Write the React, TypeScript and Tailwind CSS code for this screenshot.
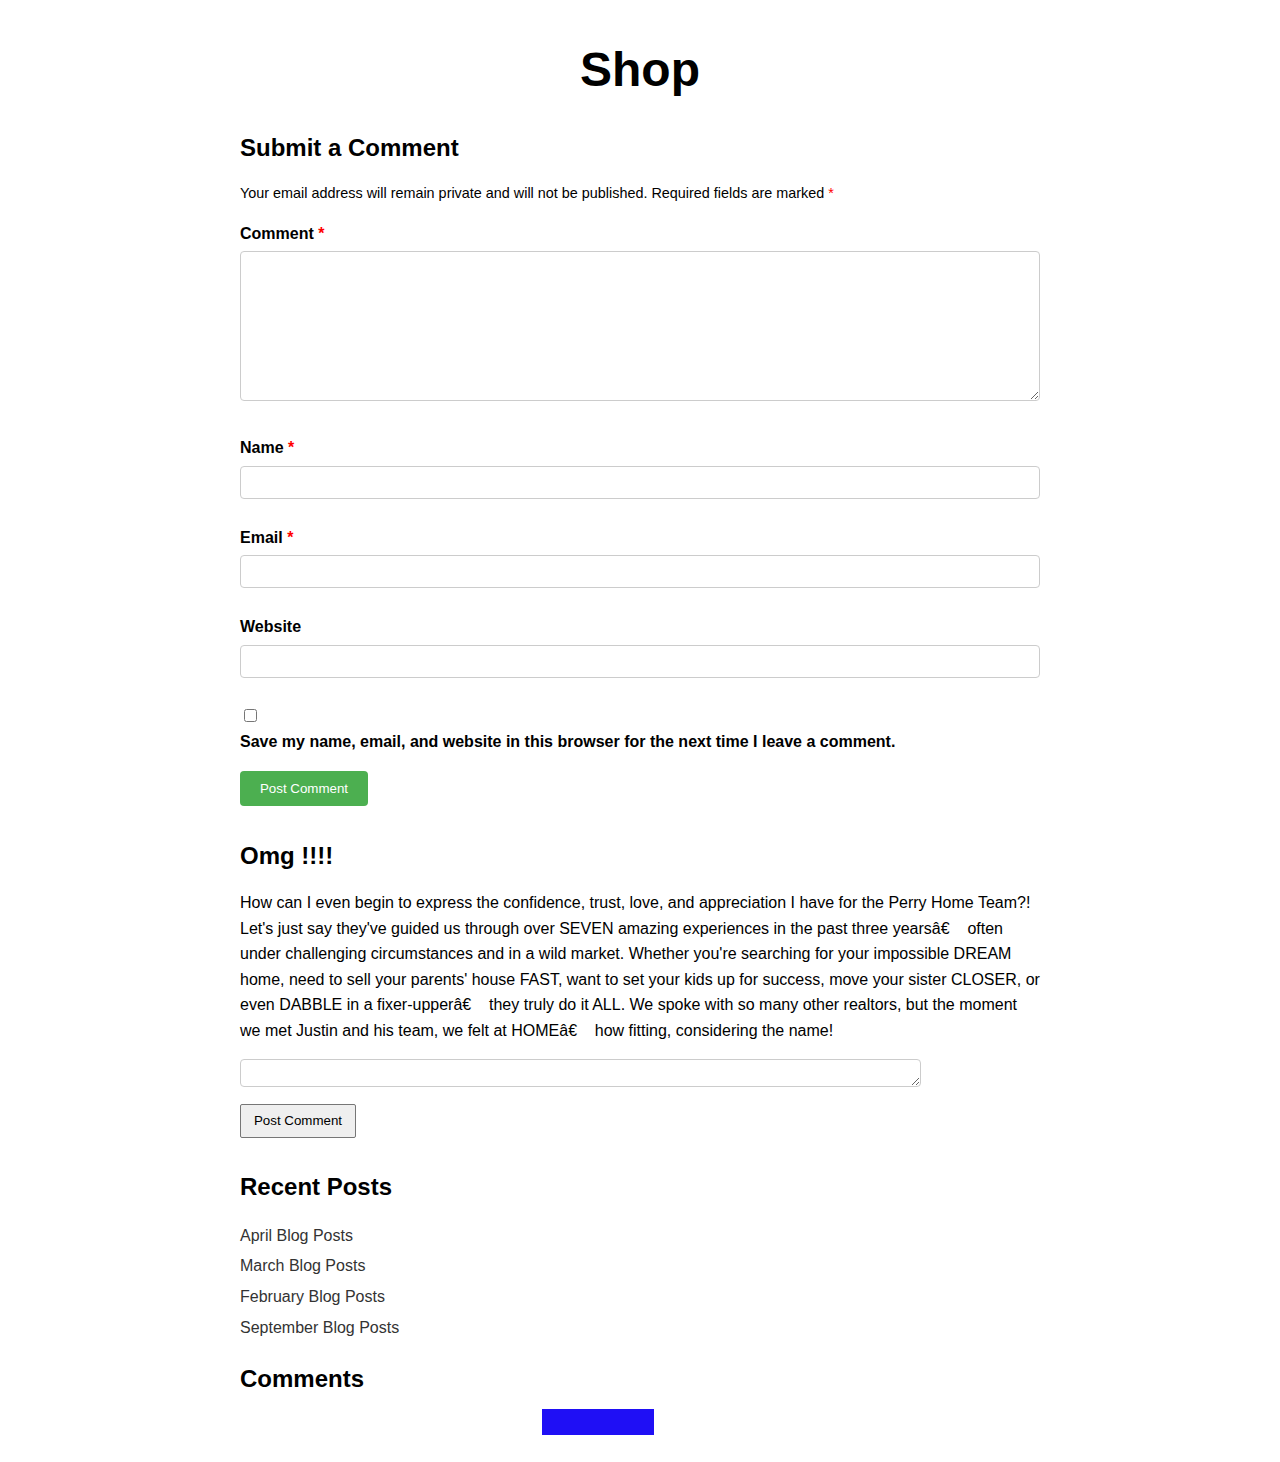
import React from "react";

function Label({ text, required }: { text: string; required?: boolean }) {
  return (
    <label className="block text-[16px] leading-[24px] font-bold text-black">
      {text}
      {required && <span className="text-[#ff0000]"> *</span>}
    </label>
  );
}

const G = "\u00A0\u00A0\u00A0\u00A0";

export default function App() {
  return (
    <div className="min-h-[1462px] bg-white font-['Liberation_Sans',Arial,sans-serif] text-black">
      <div className="mx-auto w-[800px] pt-[42px] pb-[27px]">
        <h1 className="text-center text-[48px] leading-[56px] font-bold">Shop</h1>

        <h2 className="mt-[34px] text-[24px] leading-[32px] font-bold">Submit a Comment</h2>
        <p className="mt-[19px] text-[14.4px] leading-[20px]">
          Your email address will remain private and will not be published. Required fields are marked{" "}
          <span className="text-[#ff0000]">*</span>
        </p>

        <div className="mt-[19px]">
          <Label text="Comment" required />
        </div>
        <textarea className="mt-[5px] block h-[150px] w-[800px] resize rounded-[4px] border border-[#cccccc] p-[8px] outline-none" />

        <div className="mt-[35px]">
          <Label text="Name" required />
        </div>
        <input type="text" className="mt-[6px] block h-[33px] w-[800px] rounded-[4px] border border-[#cccccc] px-[8px] outline-none" />

        <div className="mt-[27px]">
          <Label text="Email" required />
        </div>
        <input type="email" className="mt-[5px] block h-[33px] w-[800px] rounded-[4px] border border-[#cccccc] px-[8px] outline-none" />

        <div className="mt-[27px]">
          <Label text="Website" />
        </div>
        <input type="url" className="mt-[6px] block h-[33px] w-[800px] rounded-[4px] border border-[#cccccc] px-[8px] outline-none" />

        <input type="checkbox" className="mt-[31px] ml-[4px] block h-[13px] w-[13px]" />
        <div className="mt-[8px]">
          <Label text="Save my name, email, and website in this browser for the next time I leave a comment." />
        </div>

        <button className="mt-[17px] block h-[35px] w-[128px] rounded-[4px] bg-[#4caf50] text-[13.33px] text-white">
          Post Comment
        </button>

        <h2 className="mt-[34px] text-[24px] leading-[32px] font-bold">Omg !!!!</h2>
        <p className="mt-[18px] text-[16px] leading-[25.6px]">
          {"How can I even begin to express the confidence, trust, love, and appreciation I have for the Perry Home Team?! Let's just say they've guided us through over SEVEN amazing experiences in the past three yearsâ€" +
            G +
            "often under challenging circumstances and in a wild market. Whether you're searching for your impossible DREAM home, need to sell your parents' house FAST, want to set your kids up for success, move your sister CLOSER, or even DABBLE in a fixer-upperâ€" +
            G +
            "they truly do it ALL. We spoke with so many other realtors, but the moment we met Justin and his team, we felt at HOMEâ€" +
            G +
            "how fitting, considering the name!"}
        </p>

        <textarea className="mt-[15px] block h-[28px] w-[681px] resize rounded-[4px] border border-[#cccccc] px-[4px] outline-none" />
        <button className="mt-[17px] block h-[34px] w-[116px] rounded-[2px] border border-[#767676] bg-[#efefef] text-[13.33px] text-black">
          Post Comment
        </button>

        <h2 className="mt-[33px] text-[24px] leading-[32px] font-bold">Recent Posts</h2>
        <ul className="mt-[18px]">
          {["April Blog Posts", "March Blog Posts", "February Blog Posts", "September Blog Posts"].map((t) => (
            <li key={t} className="text-[16px] leading-[30.67px]">
              <a className="text-[#333333]">{t}</a>
            </li>
          ))}
        </ul>

        <h2 className="mt-[20px] text-[24px] leading-[32px] font-bold">Comments</h2>
        <div className="mt-[14px] ml-[302px] h-[26px] w-[112px] bg-[#1f0ff5]" />
      </div>
    </div>
  );
}
